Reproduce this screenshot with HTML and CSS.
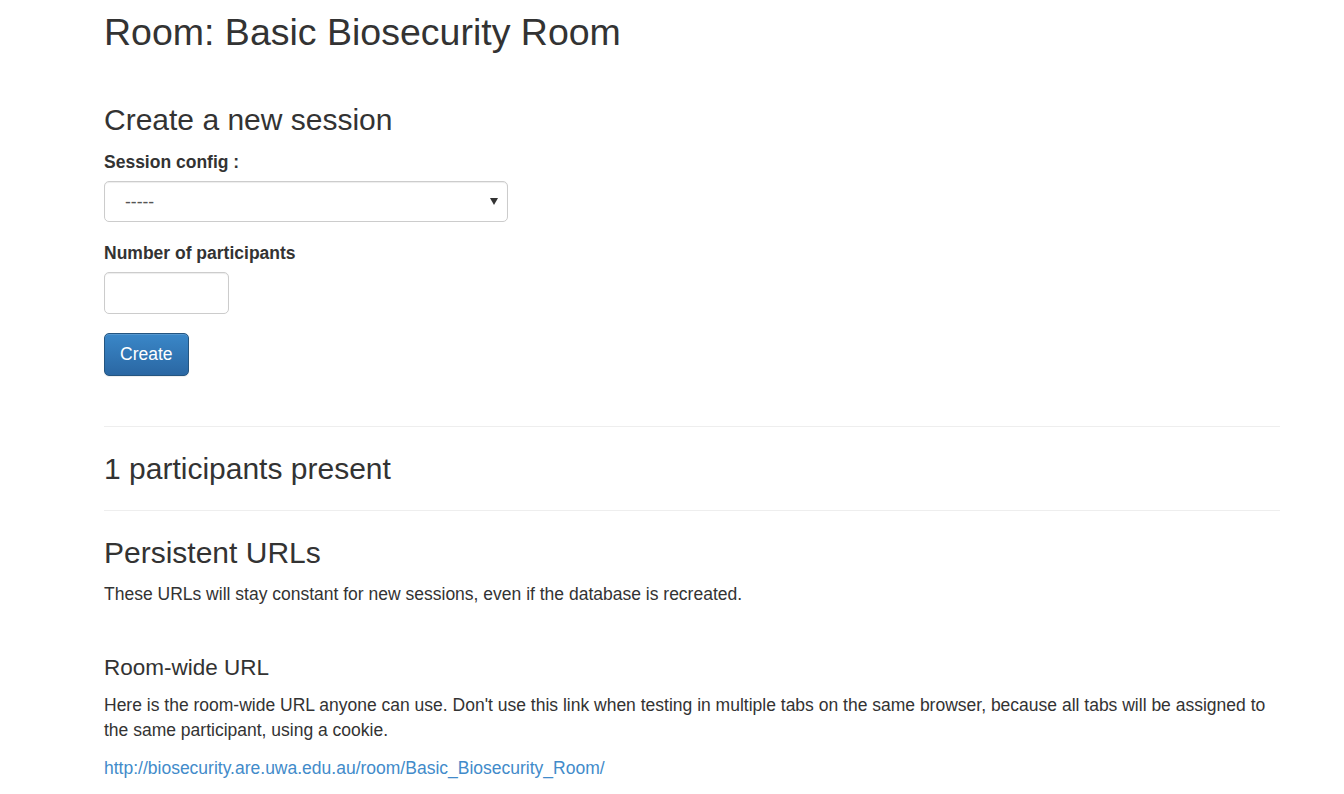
FILE: index.html
```html
<!DOCTYPE html>
<html lang="en">
<head>
<meta charset="utf-8">
<title>Room: Basic Biosecurity Room</title>
<link rel="stylesheet" href="styles.css">
</head>
<body>
<div class="container">
  <h2 class="page-title">Room: Basic Biosecurity Room</h2>

  <h3 class="section-title first">Create a new session</h3>
  <form class="session-form">
    <div class="form-group">
      <label class="form-label" for="cfg">Session config :</label>
      <div class="select-wrap">
        <select id="cfg" class="form-control select-control">
          <option>-----</option>
        </select>
        <svg class="select-arrow" width="8" height="7" viewBox="0 0 8 7"><path d="M0 0 H8 L4 7 Z" fill="#333"/></svg>
      </div>
    </div>
    <div class="form-group">
      <label class="form-label" for="num">Number of participants</label>
      <input id="num" class="form-control num-control" type="text">
    </div>
    <button type="button" class="btn-primary">Create</button>
  </form>

  <hr class="divider top-divider">
  <h3 class="section-title">1 participants present</h3>
  <hr class="divider">

  <h3 class="section-title">Persistent URLs</h3>
  <p class="text">These URLs will stay constant for new sessions, even if the database is recreated.</p>

  <h4 class="sub-title">Room-wide URL</h4>
  <p class="text">Here is the room-wide URL anyone can use. Don't use this link when testing in multiple tabs on the same browser, because all tabs will be assigned to the same participant, using a cookie.</p>
  <p class="text"><a class="link" href="#">http://biosecurity.are.uwa.edu.au/room/Basic_Biosecurity_Room/</a></p>
</div>
</body>
</html>
```
FILE: styles.css
```css
html, body {
  margin: 0;
  padding: 0;
  background: #fff;
}
body {
  font-family: "Liberation Sans", Arial, sans-serif;
  font-size: 17.5px;
  line-height: 25px;
  color: #333;
}
.container {
  width: 1176px;
  padding: 0 64px 0 104px;
  box-sizing: content-box;
}
.page-title {
  margin: 12px 0 0;
  font-size: 37.5px;
  line-height: 41.25px;
  font-weight: 500;
}
.section-title {
  margin: 25px 0 13.5px;
  font-size: 30px;
  line-height: 33px;
  font-weight: 500;
}
.section-title.first {
  margin-top: 49.75px;
}
.form-group {
  margin-bottom: 18.75px;
}
.form-label {
  display: block;
  font-weight: 700;
  margin-bottom: 6.25px;
}
.form-control {
  display: block;
  box-sizing: border-box;
  height: 41.5px;
  border: 1.25px solid #ccc;
  border-radius: 5px;
  background: #fff;
  font-family: inherit;
  font-size: 17.5px;
  color: #555;
  box-shadow: inset 0 1px 1px rgba(0,0,0,.075);
}
.select-wrap {
  position: relative;
  width: 404px;
}
.select-control {
  width: 404px;
  padding: 0 20px;
  appearance: none;
  -webkit-appearance: none;
}
.select-arrow {
  position: absolute;
  right: 10px;
  top: 17px;
}
.num-control {
  width: 125px;
  padding: 0 15px;
  height: 42px;
}
.btn-primary {
  display: block;
  box-sizing: border-box;
  height: 42.5px;
  padding: 0 15px;
  border: 1.25px solid #245580;
  border-radius: 5px;
  background: linear-gradient(to bottom, #3a87c8 0%, #2a67a3 100%);
  color: #fff;
  font-family: inherit;
  font-size: 17.5px;
  line-height: 25px;
  box-shadow: inset 0 1px 0 rgba(255,255,255,.15), 0 1px 1px rgba(0,0,0,.075);
}
.divider {
  margin: 0;
  border: 0;
  border-top: 1.25px solid #eee;
}
.top-divider {
  margin-top: 50px;
}
.section-title + .divider {
  margin-top: 25px;
}
.text {
  margin: 0 0 13.5px;
}
.sub-title {
  margin: 48.5px 0 12.5px;
  font-size: 22.5px;
  line-height: 24.75px;
  font-weight: 500;
}
.link {
  color: #428bca;
  text-decoration: none;
}
```
